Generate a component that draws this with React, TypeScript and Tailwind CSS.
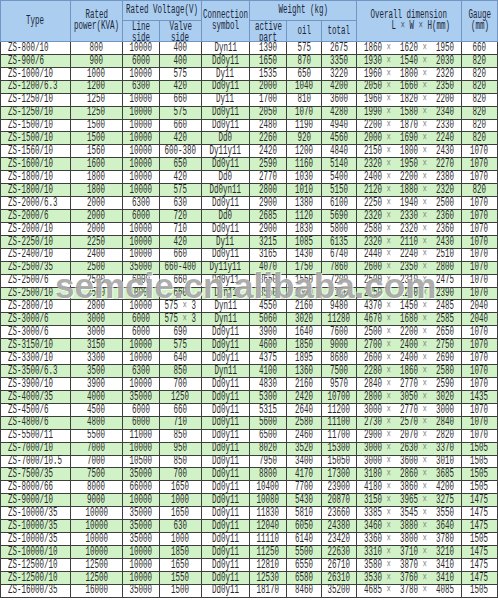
import React from "react";

type Row = [string, string, string, string, string, string, string, string, [string, string, string], string];

const rows: Row[] = [
  ["ZS-800/10", "800", "10000", "400", "Dyn11", "1390", "575", "2675", ["1860", "1620", "1950"], "660"],
  ["ZS-900/6", "900", "6000", "400", "Dd0y11", "1650", "870", "3350", ["1930", "1540", "2030"], "820"],
  ["ZS-1000/10", "1000", "10000", "575", "Dy11", "1535", "650", "3220", ["1960", "1800", "2320"], "820"],
  ["ZS-1200/6.3", "1200", "6300", "420", "Dd0y11", "2000", "1040", "4200", ["2050", "1660", "2350"], "820"],
  ["ZS-1250/10", "1250", "10000", "660", "Dy11", "1700", "810", "3600", ["1960", "1820", "2200"], "820"],
  ["ZS-1250/10", "1250", "10000", "575", "Dd0y11", "2050", "1070", "4280", ["1990", "1580", "2340"], "820"],
  ["ZS-1500/10", "1500", "10000", "660", "Dd0y11", "2480", "1190", "4940", ["2200", "1870", "2330"], "820"],
  ["ZS-1500/10", "1500", "10000", "420", "Dd0", "2260", "920", "4560", ["2000", "1690", "2240"], "820"],
  ["ZS-1560/10", "1560", "10000", "600-380", "Dy11y11", "2420", "1200", "4840", ["2150", "1800", "2430"], "1070"],
  ["ZS-1600/10", "1600", "10000", "650", "Dd0y11", "2590", "1160", "5140", ["2320", "1950", "2270"], "1070"],
  ["ZS-1800/10", "1800", "10000", "420", "Dd0", "2770", "1030", "5400", ["2400", "2200", "2380"], "1070"],
  ["ZS-1800/10", "1800", "10000", "575", "Dd0yn11", "2800", "1010", "5150", ["2120", "1880", "2320"], "820"],
  ["ZS-2000/6.3", "2000", "6300", "630", "Dd0y11", "2900", "1380", "6100", ["2250", "1940", "2500"], "1070"],
  ["ZS-2000/6", "2000", "6000", "720", "Dd0", "2685", "1120", "5690", ["2320", "2330", "2360"], "1070"],
  ["ZS-2000/10", "2000", "10000", "710", "Dd0y11", "2900", "1830", "5800", ["2580", "2320", "2360"], "1070"],
  ["ZS-2250/10", "2250", "10000", "420", "Dy11", "3215", "1085", "6135", ["2320", "2110", "2430"], "1070"],
  ["ZS-2400/10", "2400", "10000", "660", "Dd0y11", "3165", "1430", "6740", ["2440", "2240", "2510"], "1070"],
  ["ZS-2500/35", "2500", "35000", "660-400", "Dy11y11", "4070", "1750", "7860", ["2600", "2350", "2800"], "1070"],
  ["ZS-2500/6", "2500", "6000", "660", "Dd0y11", "3650", "1550", "7200", ["2500", "2310", "2475"], "1070"],
  ["ZS-2500/10", "2500", "10000", "660", "Dyn11", "3550", "1600", "7100", ["2250", "2200", "2390"], "1070"],
  ["ZS-2800/10", "2800", "10000", "575 × 3", "Dyn11", "4550", "2160", "9480", ["4370", "1450", "2485"], "2040"],
  ["ZS-3000/6", "3000", "6000", "575 × 3", "Dyn11", "5060", "3020", "11280", ["4670", "1680", "2585"], "2040"],
  ["ZS-3000/6", "3000", "6000", "690", "Dd0y11", "3900", "1640", "7600", ["2500", "2200", "2650"], "1070"],
  ["ZS-3150/10", "3150", "10000", "575", "Dd0y11", "4600", "1850", "9000", ["2700", "2400", "2750"], "1070"],
  ["ZS-3300/10", "3300", "10000", "640", "Dd0y11", "4375", "1895", "8680", ["2600", "2400", "2690"], "1070"],
  ["ZS-3500/6.3", "3500", "6300", "850", "Dyn11", "4100", "1360", "7500", ["2280", "1860", "2580"], "1070"],
  ["ZS-3900/10", "3900", "10000", "700", "Dd0y11", "4830", "2160", "9570", ["2840", "2770", "2590"], "1070"],
  ["ZS-4000/35", "4000", "35000", "1250", "Dd0y11", "5300", "2420", "10700", ["2800", "3050", "3020"], "1435"],
  ["ZS-4500/6", "4500", "6000", "660", "Dd0y11", "5315", "2640", "11200", ["3000", "2770", "3000"], "1070"],
  ["ZS-4800/6", "4800", "6000", "710", "Dd0y11", "5600", "2580", "11100", ["2730", "2570", "2840"], "1070"],
  ["ZS-5500/11", "5500", "11000", "850", "Dd0y11", "6500", "2460", "11700", ["2900", "2070", "2820"], "1070"],
  ["ZS-7000/10", "7000", "10000", "950", "Dd0y11", "8020", "3520", "15300", ["3000", "2630", "3370"], "1505"],
  ["ZS-7000/10.5", "7000", "10500", "850", "Dd0y11", "7950", "3400", "15050", ["3000", "3600", "3010"], "1505"],
  ["ZS-7500/35", "7500", "35000", "700", "Dd0y11", "8800", "4170", "17300", ["3180", "2860", "3685"], "1505"],
  ["ZS-8000/66", "8000", "66000", "1650", "Dd0y11", "10400", "7700", "23900", ["4180", "3860", "4200"], "1505"],
  ["ZS-9000/10", "9000", "10000", "1000", "Dd0y11", "10080", "5430", "20870", ["3150", "3965", "3275"], "1475"],
  ["ZS-10000/35", "10000", "35000", "1650", "Dd0y11", "11830", "5810", "23660", ["3385", "3545", "3550"], "1475"],
  ["ZS-10000/35", "10000", "35000", "630", "Dd0y11", "12040", "6050", "24380", ["3460", "3880", "3640"], "1475"],
  ["ZS-10000/35", "10000", "35000", "1000", "Dd0y11", "11110", "6140", "23420", ["3360", "3800", "3780"], "1505"],
  ["ZS-10000/10", "10000", "10000", "1850", "Dd0y11", "11250", "5500", "22630", ["3310", "3710", "3210"], "1475"],
  ["ZS-12500/10", "12500", "10000", "1650", "Dd0y11", "12810", "6550", "26710", ["3580", "3870", "3410"], "1475"],
  ["ZS-12500/10", "12500", "10000", "1550", "Dd0y11", "12530", "6580", "26310", ["3530", "3760", "3410"], "1475"],
  ["ZS-16000/35", "16000", "35000", "1500", "Dd0y11", "18170", "8460", "35200", ["4685", "3780", "4085"], "1505"],
];

const FONT = "[font-family:'Liberation_Mono','DejaVu_Sans_Mono',monospace]";

function T({ children, left = false }: { children: React.ReactNode; left?: boolean }) {
  return (
    <span
      className={`inline-block whitespace-pre leading-none scale-x-[0.6] ${left ? "origin-left" : "origin-center"}`}
    >
      {children}
    </span>
  );
}

function HLines({ lines }: { lines: React.ReactNode[] }) {
  return (
    <div className="flex flex-col items-center leading-[11px]">
      {lines.map((l, i) => (
        <span key={i} className="inline-block whitespace-pre scale-x-[0.6] origin-center">
          {l}
        </span>
      ))}
    </div>
  );
}

const COLS = "grid-cols-[69px_51px_36px_41px_47px_36px_34px_34px_104px_35px]";
const HC = "bg-[#aacdf0] flex justify-center overflow-hidden";

export default function App() {
  return (
    <div className={`relative w-[498px] h-[600px] overflow-hidden bg-white ${FONT} text-[12.5px]`}>
      <div className={`grid ${COLS} grid-rows-[19px_20px] gap-px p-px bg-[#7196c4] text-[#1c2636]`}>
        <div className={`${HC} items-center col-start-1 row-start-1 row-span-2`}>
          <T>Type</T>
        </div>
        <div className={`${HC} items-center col-start-2 row-start-1 row-span-2`}>
          <HLines lines={["Rated", "power(KVA)"]} />
        </div>
        <div className={`${HC} items-center col-start-3 col-span-2 row-start-1`}>
          <T>Rated Voltage(V)</T>
        </div>
        <div className={`${HC} items-center col-start-5 row-start-1 row-span-2`}>
          <HLines lines={["Connection", "symbol"]} />
        </div>
        <div className={`${HC} items-center col-start-6 col-span-3 row-start-1`}>
          <T>Weight (kg)</T>
        </div>
        <div className={`${HC} items-center col-start-9 row-start-1 row-span-2`}>
          <div className="flex flex-col items-center leading-[11px]">
            <span className="inline-block whitespace-pre scale-x-[0.6] origin-center">Overall dimension</span>
            <span className="inline-block whitespace-pre scale-x-[0.6] origin-center ml-[24px]">
              L <span className="text-[#4a5a70]">×</span> W <span className="text-[#4a5a70]">×</span> H(mm)
            </span>
          </div>
        </div>
        <div className={`${HC} items-center col-start-10 row-start-1 row-span-2`}>
          <HLines lines={["Gauge", "(mm)"]} />
        </div>
        <div className={`${HC} items-start pt-[1px] col-start-3 row-start-2`}>
          <HLines lines={["Line", "side"]} />
        </div>
        <div className={`${HC} items-start pt-[1px] col-start-4 row-start-2`}>
          <HLines lines={["Valve", "side"]} />
        </div>
        <div className={`${HC} items-start pt-[1px] col-start-6 row-start-2`}>
          <HLines lines={["active", "part"]} />
        </div>
        <div className={`${HC} items-center col-start-7 row-start-2`}>
          <T>oil</T>
        </div>
        <div className={`${HC} items-center col-start-8 row-start-2`}>
          <T>total</T>
        </div>
      </div>

      <div className={`grid ${COLS} auto-rows-[11.93px] gap-px px-px pb-px bg-[#3e3e3e] text-[#2a2a2a]`}>
        {rows.map((r, i) => {
          const bg = i % 2 === 0 ? "bg-white" : "bg-[#d0f2c6]";
          const cell = `${bg} flex items-center justify-center`;
          return (
            <React.Fragment key={i}>
              <div className={`${bg} flex items-center pl-[7px]`}>
                <T left>{r[0]}</T>
              </div>
              <div className={cell}><T>{r[1]}</T></div>
              <div className={cell}><T>{r[2]}</T></div>
              <div className={cell}>
                <T>
                  {r[3].includes("×") ? (
                    <>
                      575 <span className="text-[#888]">×</span> 3
                    </>
                  ) : (
                    r[3]
                  )}
                </T>
              </div>
              <div className={cell}><T>{r[4]}</T></div>
              <div className={cell}><T>{r[5]}</T></div>
              <div className={cell}><T>{r[6]}</T></div>
              <div className={cell}><T>{r[7]}</T></div>
              <div className={cell}>
                <T>
                  {r[8][0]} <span className="text-[#8a8a8a]">×</span>  {r[8][1]} <span className="text-[#8a8a8a]">×</span>  {r[8][2]}
                </T>
              </div>
              <div className={cell}><T>{r[9]}</T></div>
            </React.Fragment>
          );
        })}
      </div>

      <div className="absolute left-[55px] top-[268px] pointer-events-none whitespace-nowrap [font-family:'Liberation_Sans',Arial,sans-serif] font-bold text-[35px] leading-[35px] text-[rgba(120,120,120,0.62)] [text-shadow:1px_1px_0_rgba(255,255,255,0.85),-1px_-1px_0_rgba(255,255,255,0.5)]">
        semcie.cn.alibaba.com
      </div>
    </div>
  );
}
